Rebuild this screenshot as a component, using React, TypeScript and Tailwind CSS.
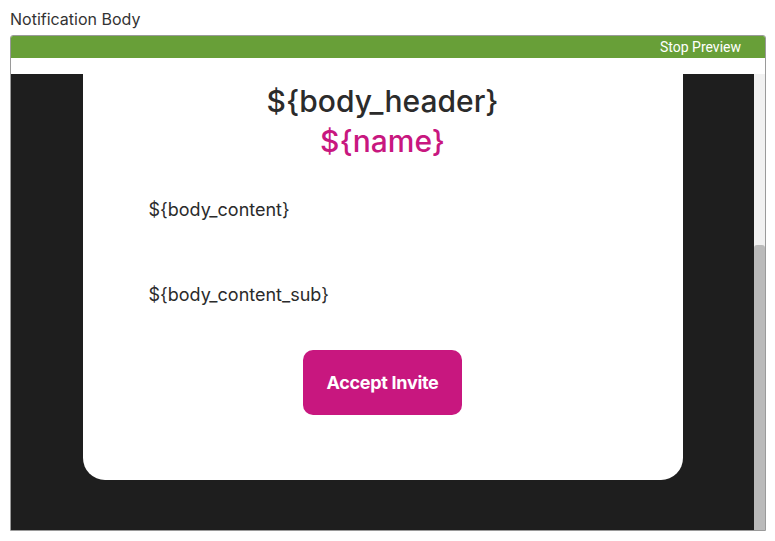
export default function App() {
  return (
    <div className="w-[775px] h-[541px] bg-white relative" style={{ fontFamily: "Inter, 'Noto Sans', sans-serif" }}>
      <div className="pl-[10px] pt-[9px] text-[16px] leading-[20px] text-[#333]">Notification Body</div>
      <div className="ml-[10px] mt-[6px] w-[756px] h-[496px] border border-[#9a9a9a] rounded-t-[3px] flex flex-col overflow-hidden">
        {/* toolbar */}
        <div className="h-[22px] bg-[#689f38] flex items-center justify-end pr-[24px] shrink-0">
          <span className="text-white text-[14px] leading-[18px] -mt-[1px]" style={{ fontFamily: "Roboto, 'Liberation Sans', sans-serif" }}>Stop Preview</span>
        </div>
        <div className="h-[16px] bg-white shrink-0" />
        {/* preview viewport */}
        <div className="flex-1 flex min-h-0">
          <div className="flex-1 bg-[#1e1e1e] flex justify-center">
            <div className="w-[600px] h-[406px] bg-white rounded-b-[22px] flex flex-col items-center">
              <div className="mt-[9px] text-[30px] leading-[36px] text-[#2b2b2b] font-medium">${"{body_header}"}</div>
              <div className="mt-[4px] text-[30px] leading-[36px] text-[#c8177f] font-medium">${"{name}"}</div>
              <div className="self-stretch pl-[66px] mt-[39px] text-[18px] leading-[24px] text-[#2b2b2b]">${"{body_content}"}</div>
              <div className="self-stretch pl-[66px] mt-[61px] text-[18px] leading-[24px] text-[#2b2b2b]">${"{body_content_sub}"}</div>
              <div className="mt-[43px] w-[159px] h-[65px] bg-[#c8177f] rounded-[10px] flex items-center justify-center text-white text-[18px] font-bold tracking-[-0.3px]">
                Accept Invite
              </div>
            </div>
          </div>
          {/* scrollbar */}
          <div className="w-[11px] bg-[#f1f1f1] flex flex-col justify-end">
            <div className="h-[285px] bg-[#bababa] rounded-t-[3px]" />
          </div>
        </div>
      </div>
    </div>
  );
}
